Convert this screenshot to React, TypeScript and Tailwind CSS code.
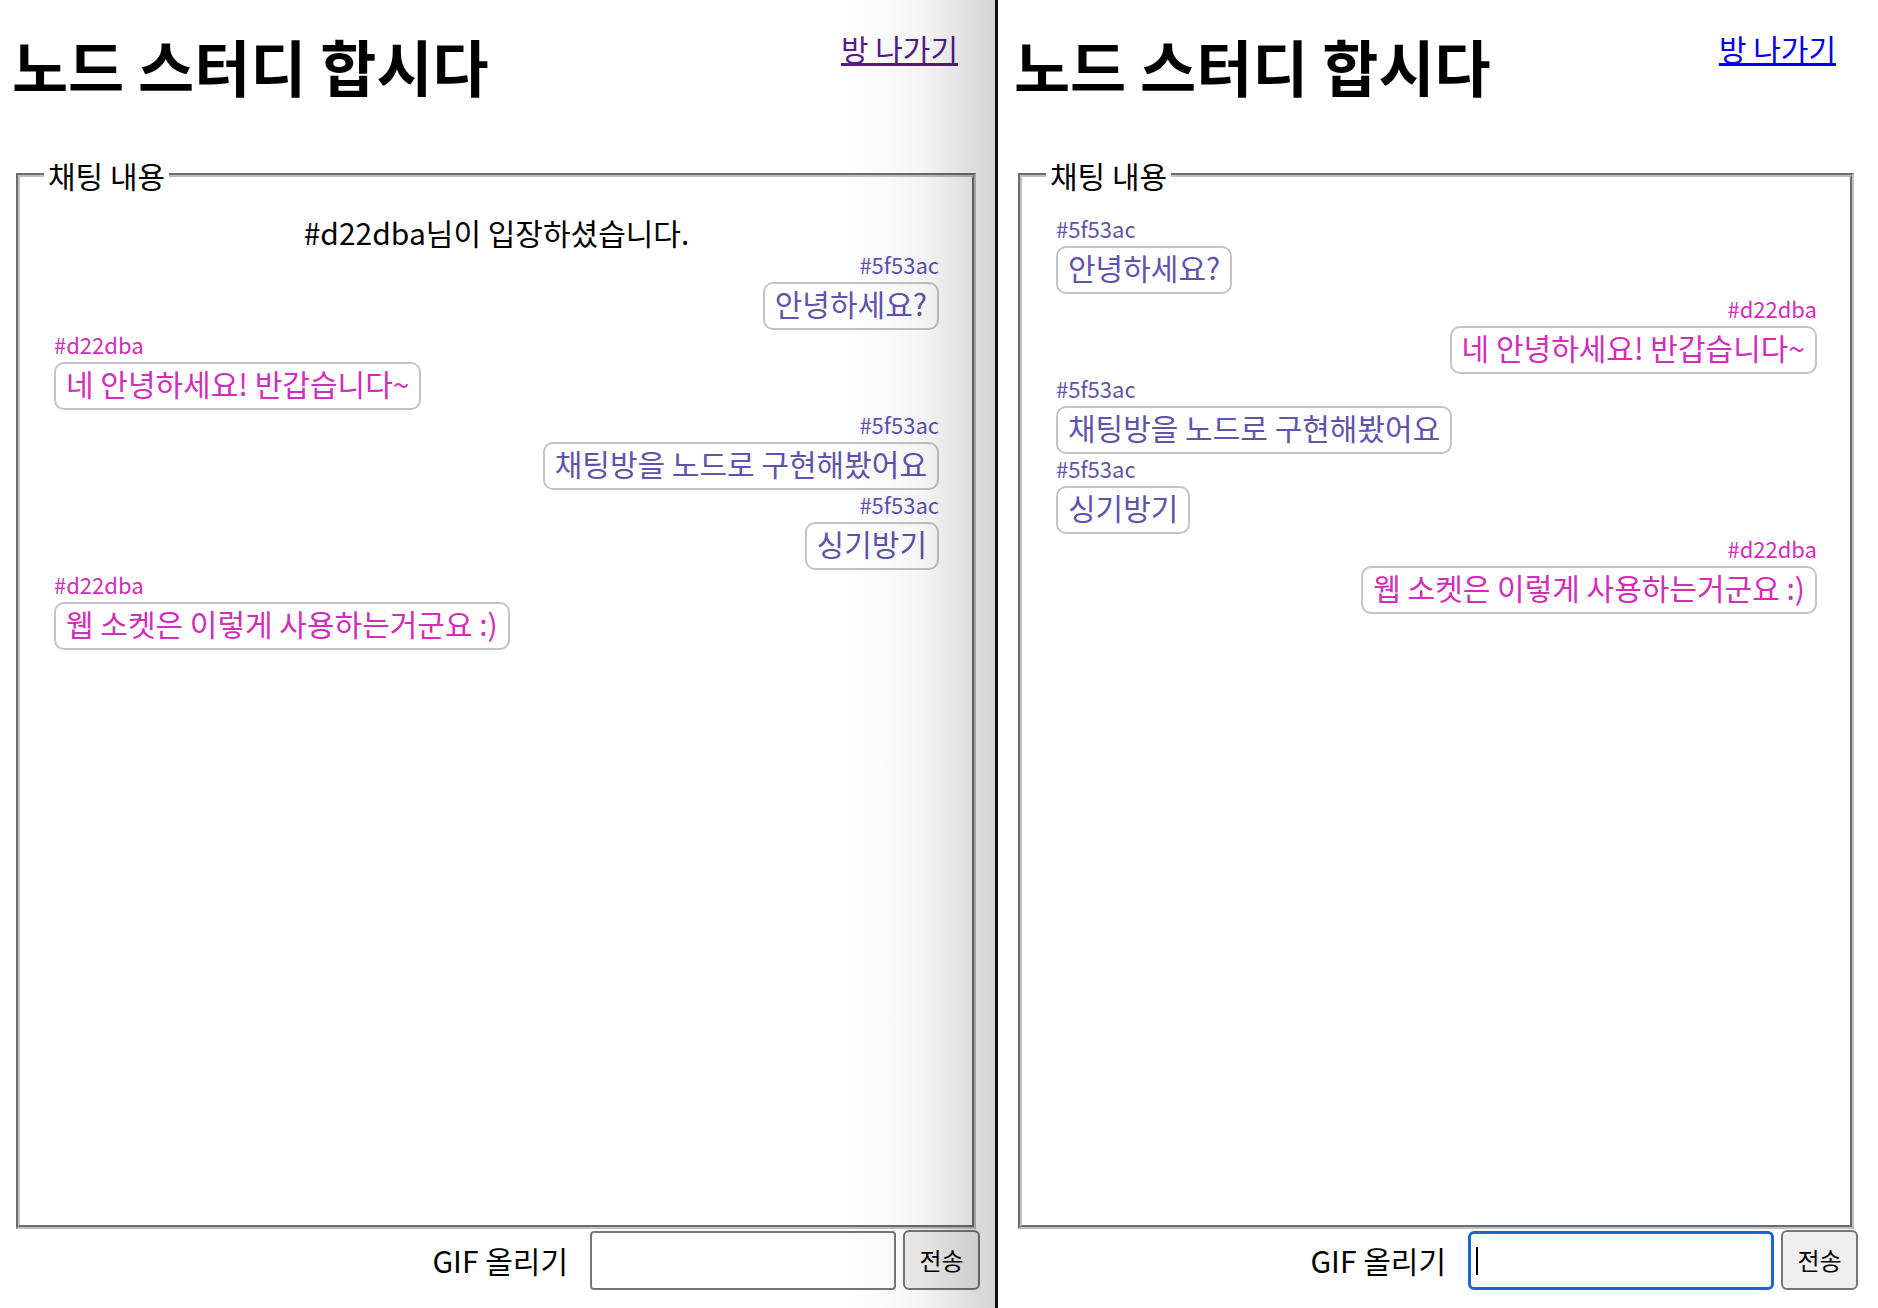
import React from 'react';
import clsx from 'clsx';

type User = '5f53ac' | 'd22dba';
type Msg =
    | { kind: 'system'; text: string }
    | { kind: 'chat'; user: User; text: string; mine: boolean };

const leftMessages: Msg[] = [
    { kind: 'system', text: '#d22dba님이 입장하셨습니다.' },
    { kind: 'chat', user: '5f53ac', text: '안녕하세요?', mine: true },
    { kind: 'chat', user: 'd22dba', text: '네 안녕하세요! 반갑습니다~', mine: false },
    { kind: 'chat', user: '5f53ac', text: '채팅방을 노드로 구현해봤어요', mine: true },
    { kind: 'chat', user: '5f53ac', text: '싱기방기', mine: true },
    { kind: 'chat', user: 'd22dba', text: '웹 소켓은 이렇게 사용하는거군요 :)', mine: false },
];

const rightMessages: Msg[] = [
    { kind: 'chat', user: '5f53ac', text: '안녕하세요?', mine: false },
    { kind: 'chat', user: 'd22dba', text: '네 안녕하세요! 반갑습니다~', mine: true },
    { kind: 'chat', user: '5f53ac', text: '채팅방을 노드로 구현해봤어요', mine: false },
    { kind: 'chat', user: '5f53ac', text: '싱기방기', mine: false },
    { kind: 'chat', user: 'd22dba', text: '웹 소켓은 이렇게 사용하는거군요 :)', mine: true },
];

function ChatLine({ msg }: { msg: Msg }) {
    if (msg.kind === 'system') {
        return <div className="text-center text-[30px] leading-[36px] text-black">{msg.text}</div>;
    }
    const color = msg.user === '5f53ac' ? 'text-[#5f53ac]' : 'text-[#d22dba]';
    return (
        <div className={clsx('flex flex-col', msg.mine ? 'items-end' : 'items-start')}>
            <div className={clsx('text-[22px] leading-[28px]', color)}>#{msg.user}</div>
            <div
                className={clsx(
                    'mt-[4px] h-[48px] whitespace-nowrap rounded-[10px] border-2 border-[#c4c4c4] px-[10px] pt-[1px] text-[30px] leading-[36px]',
                    color
                )}
            >
                {msg.text}
            </div>
        </div>
    );
}

function ChatWindow({ messages, visited, focused }: { messages: Msg[]; visited?: boolean; focused?: boolean }) {
    return (
        <>
            <div className="flex items-start justify-between">
                <h1 className="mt-[30px] text-[61px] font-bold leading-[72px] text-black">노드 스터디 합시다</h1>
                <a
                    href="#"
                    className={clsx(
                        'mr-[22px] mt-[28px] text-[30px] leading-[40px] underline',
                        visited ? 'text-[#551a8b]' : 'text-[#0000ee]'
                    )}
                >
                    방 나가기
                </a>
            </div>
            <fieldset className="mx-[4px] mt-[53px] border-4 border-[#c0c0c0] pb-[21px] pl-[24px] pr-[33px] pt-[19px] [border-style:groove]">
                <legend className="px-[4px] text-[30px] leading-[40px] text-black">채팅 내용</legend>
                <div className="flex h-[990px] flex-col pl-[10px]">
                    {messages.map((m, i) => (
                        <ChatLine key={i} msg={m} />
                    ))}
                </div>
            </fieldset>
            <form className="mt-[1px] flex items-center justify-end" onSubmit={(e) => e.preventDefault()}>
                <label className="mr-[22px] text-[30px] leading-[40px] text-black">GIF 올리기</label>
                <div className="relative">
                    <input
                        type="text"
                        readOnly
                        className={clsx(
                            'h-[59px] w-[306px] bg-white outline-none',
                            focused ? 'rounded-[6px] border-[3px] border-[#1a66d4]' : 'rounded-[4px] border-2 border-[#767676]'
                        )}
                    />
                    {focused && <span className="absolute left-[8px] top-[16px] h-[28px] w-[2px] bg-black" />}
                </div>
                <button
                    type="submit"
                    className="ml-[7px] h-[60px] w-[77px] rounded-[6px] border-2 border-[#767676] bg-[#efefef] text-[24px] text-black"
                >
                    전송
                </button>
            </form>
        </>
    );
}

export default function App() {
    return (
        <div className="flex h-[1308px] w-[1878px] overflow-hidden bg-white font-['Noto_Sans_CJK_KR',sans-serif]">
            <div className="relative w-[995px] shrink-0 pl-[12px] pr-[15px]">
                <ChatWindow messages={leftMessages} visited />
                {/* window shadow at the right edge */}
                <div className="pointer-events-none absolute right-0 top-0 h-full w-[150px] bg-linear-to-r from-transparent via-black/[0.04] to-black/[0.17]" />
            </div>
            <div className="w-[3px] shrink-0 bg-[#111111]" />
            <div className="flex-1 pl-[16px] pr-[20px]">
                <ChatWindow messages={rightMessages} focused />
            </div>
        </div>
    );
}
